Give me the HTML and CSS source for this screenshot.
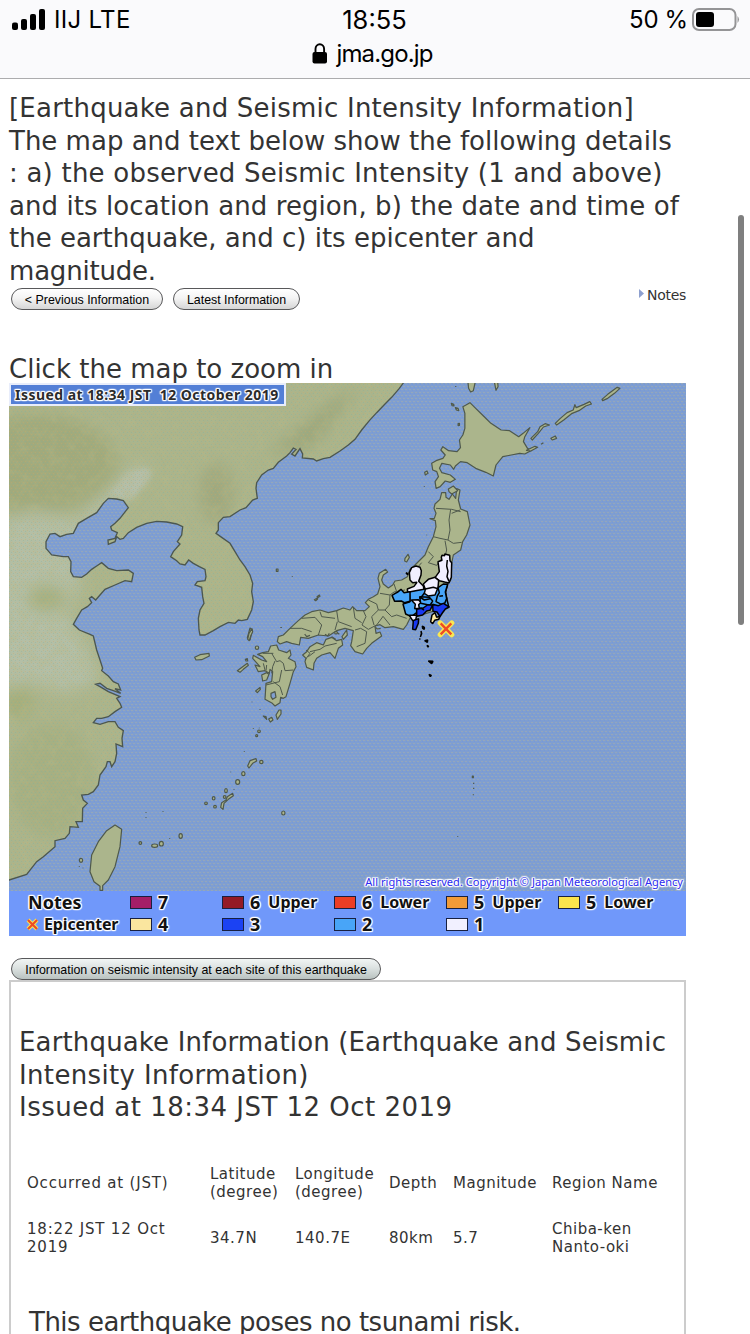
FILE: index.html
```html
<!DOCTYPE html>
<html lang="en">
<head>
<meta charset="utf-8">
<title>Earthquake Information</title>
<link rel="stylesheet" href="styles.css">
</head>
<body>
<header class="browser-bar">
  <div class="status-row">
    <div class="carrier">
      <svg class="signal" viewBox="0 0 34 22"><rect x="0" y="13.500" width="6" height="7.500" rx="2"/><rect x="9" y="10" width="6" height="11" rx="2"/><rect x="18" y="5" width="6" height="16" rx="2"/><rect x="27" y="0" width="6" height="21" rx="2"/></svg>
      <span>IIJ LTE</span>
    </div>
    <div class="clock">18:55</div>
    <div class="power"><span>50 %</span>
      <svg class="battery" viewBox="0 0 48 24"><rect x="1" y="1" width="42.500" height="21" rx="6" fill="none" stroke="#949496" stroke-width="2"/><rect x="4" y="4" width="18" height="15" rx="3"/><path d="M45.500 8q3 3.500 0 7z" fill="#949496"/></svg>
    </div>
  </div>
  <div class="address-row">
    <svg class="lock" viewBox="0 0 16 21"><rect x="0.500" y="9" width="14.500" height="11.500" rx="2"/><path d="M3.500 10V6a4.300 4.800 0 0 1 8.600 0v4" fill="none" stroke="#000" stroke-width="1.900"/></svg>
    <span class="url">jma.go.jp</span>
  </div>
</header>

<main class="page">
  <p class="intro"><span class="wide">[Earthquake and Seismic Intensity Information]</span><br>The map and text below show the following details<br><span class="wide">: a) the observed Seismic Intensity (1 and above)</span><br><span class="slight">and its location and region, b) the date and time of</span><br>the earthquake, and c) its epicenter and<br><span class="narrow">magnitude.</span></p>
  <div class="controls">
    <button class="pill prev">&lt; Previous Information</button>
    <button class="pill latest">Latest Information</button>
    <a class="notes"><svg class="arrow" viewBox="0 0 6 9"><path d="M1 0l5 4.500L1 9z" fill="#8ea0cf"/></svg>Notes</a>
  </div>
  <p class="hint">Click the map to zoom in</p>

  <section class="map">
    <svg class="chart" viewBox="27 9 2031 1524" preserveAspectRatio="none">
      <defs>
        <pattern id="dots" x="27" y="9" width="12" height="18" patternUnits="userSpaceOnUse"><path d="M0 1.500h6M6 10.500h6" stroke="#c3bb86" stroke-width="3" opacity=".3"/><path d="M9 4.500h3M3 13.500h3" stroke="#5f8fe8" stroke-width="3" opacity=".25"/></pattern>
        <pattern id="grain" x="27" y="9" width="12" height="18" patternUnits="userSpaceOnUse"><path d="M0 1.500h3M6 10.500h3" stroke="#cfa565" stroke-width="3" opacity=".35"/><path d="M6 4.500h3M0 13.500h3" stroke="#78aaa0" stroke-width="3" opacity=".3"/></pattern>
        <filter id="soft" x="-50%" y="-50%" width="200%" height="200%"><feGaussianBlur stdDeviation="22"/></filter>
        <filter id="haze" x="-50%" y="-50%" width="200%" height="200%"><feGaussianBlur stdDeviation="8"/></filter>
        <filter id="relief" x="0" y="0" width="100%" height="100%"><feTurbulence type="fractalNoise" baseFrequency=".035" numOctaves="4" seed="7"/><feColorMatrix values="0 0 0 0 .47 0 0 0 0 .49 0 0 0 0 .25 1.300 0 0 0 -.5"/></filter>
        <path id="asia" d="M10 -5H1218L1210 9L1198 25L1175 52L1155 72L1130 98L1108 122L1085 150L1065 178L1045 195L1020 213L990 232L970 236L950 243L940 237L907 234L908 222L900 206L885 228L875 222L888 208L880 204L870 218L860 228L835 247L820 265L805 270L785 285L770 308L768 325L772 355L758 360L738 383L720 390L690 410L670 412L655 428L655 450L648 460L665 472L690 490L705 515L720 540L735 560L750 585L758 610L755 635L760 665L755 690L742 718L725 722L715 720L705 730L685 727L660 740L640 752L615 765L600 765L597 750L595 715L600 690L612 670L608 650L605 622L585 615L592 605L615 602L618 590L615 568L598 560L580 550L566 540L555 555L540 552L530 542L512 530L520 515L540 492L532 485L545 465L548 440L530 432L500 426L470 424L440 430L410 442L385 458L370 475L360 478L350 470L345 485L325 493L324 480L345 475L352 458L335 450L332 440L345 430L360 415L385 383L370 362L350 357L325 355L310 370L290 398L260 415L235 430L220 460L200 463L180 470L165 460L150 462L138 485L138 505L155 525L190 530L205 530L213 545L212 575L220 590L245 592L260 582L275 568L290 558L305 548L325 565L350 572L385 570L400 580L395 605L375 602L345 615L315 628L300 645L287 660L275 650L268 655L275 668L262 680L245 690L230 715L220 733L238 750L270 763L280 768L290 810L300 840L308 865L305 872L325 888L340 905L355 912L362 930L345 926L362 940L340 932L320 925L300 910L287 913L300 920L325 935L360 950L350 955L360 970L365 982L345 995L325 1010L305 1015L290 1015L280 1028L300 1033L325 1025L345 1025L355 1042L370 1052L366 1075L368 1100L348 1092L350 1120L345 1145L335 1160L330 1145L322 1145L318 1160L300 1185L295 1215L280 1235L265 1243L245 1245L250 1260L262 1270L248 1285L247 1325L228 1325L235 1342L210 1340L208 1360L195 1375L165 1382L165 1400L130 1430L110 1445L80 1483L27 1500L10 1505Z"/>
        <clipPath id="asiaClip"><use href="#asia"/></clipPath>
      </defs>
      <rect x="27" y="9" width="2031" height="1524" fill="#7f9ed1"/>
      <rect x="27" y="9" width="2031" height="1524" fill="url(#dots)"/>
      <use href="#asia" class="land"/>
      <g clip-path="url(#asiaClip)">
        <g filter="url(#soft)">
          <ellipse cx="110" cy="250" rx="240" ry="150" fill="#a1aa7c"/>
          <path d="M0 430L100 390L230 420L420 250L450 270L300 420L220 480L240 620L200 700L260 800L300 900L200 940L60 900L0 1080Z" fill="#b4bfa6"/>
          <ellipse cx="140" cy="655" rx="60" ry="40" fill="#a6b080"/>
          <ellipse cx="50" cy="970" rx="50" ry="50" fill="#a4af7c"/>
          <ellipse cx="155" cy="1200" rx="130" ry="170" fill="#a5b083"/>
          <path d="M700 360L830 200L1000 60L1080 20L940 200L800 230Z" fill="#9da77b"/>
          <ellipse cx="650" cy="340" rx="50" ry="90" fill="#a0a97e"/>
        </g>
        <path d="M325 340L350 320L370 290L395 272L440 265L455 275L440 310L415 335L395 360L370 355Z" fill="#b5bfa8" filter="url(#haze)"/>
        <rect x="27" y="9" width="1190" height="1500" filter="url(#relief)" opacity=".55"/>
        <rect x="27" y="9" width="1190" height="1500" fill="url(#grain)"/>
      </g>
      <use href="#asia" class="coast"/>

      <g class="isle">
        <path d="M345 1335L365 1348L360 1400L345 1460L325 1500L308 1517L308 1531H300V1519L282 1505L270 1475L275 1425L295 1385L320 1352Z"/>
        <path d="M584 832L600 824L627 820L628 828L605 839L588 840Z"/>
        <path d="M712 872L728 860L742 850L745 856L730 868L720 877ZM736 838L742 836L743 843L738 843ZM742 774L750 744L757 750L750 780Z"/>
        <ellipse cx="243" cy="1441" rx="5" ry="6"/><ellipse cx="464" cy="1397" rx="9" ry="5"/><ellipse cx="484" cy="1391" rx="6" ry="7"/><ellipse cx="542" cy="1368" rx="5" ry="7"/><circle cx="421" cy="1389" r="4"/><path d="M438 1296v2M438 1311v2M489 1294v2M509 1375v2M238 1458v2M249 1463v2"/>
        <path d="M829 567h5v7h-5zM877 589v2M943 659l9-5 1 3-6 5zM951 650l7-5 2 4-7 4zM843 741v3"/>
        <path d="M1417 1188h3v5h-3zM1421 1208v4M1421 1223v4M1420 1243v3M1373 1368v2"/>
      </g>

      <!-- Hokkaido and the Kuril islands -->
      <g class="isle" transform="translate(1290 0) scale(1.0156 1)">
        <path d="M97 80L105 76L118 68L135 85L155 105L180 130L210 150L235 152L262 170L275 160L295 143L280 170L276 185L288 205L298 212L280 222L265 220L240 225L215 230L195 255L187 288L165 277L135 265L110 248L90 245L75 258L70 268L60 255L35 250L28 265L35 278L60 285L75 298L60 307L45 303L30 320L18 325L15 305L25 290L20 275L8 270L5 250L18 242L38 235L45 225L32 210L38 200L55 212L80 215L90 203L87 180L97 165L103 145L103 100Z"/>
        <path d="M298 175L318 155L325 140L340 131L353 135L335 141L320 160L302 180ZM370 130L385 115L405 98L423 90L428 74L432 83L455 73L472 65L477 72L460 78L440 92L420 100L395 120L374 135ZM508 58L525 43L553 22L561 25L545 40L525 55L510 62ZM357 175L370 168L374 175L361 180ZM285 211L310 199L318 202L298 213ZM328 193L335 188"/>
        <path d="M112 5L114 25L120 36L128 32L134 5ZM190 5L195 31L201 20L200 5ZM63 70l7 3 1 5-6-1zM75 83l8 2 2 7-7-2zM83 131l4-1v6l-4 1zM76 18v3"/>
      </g>

      <!-- Honshu -->
      <g class="isle" transform="translate(720 0)">
        <path d="M605 338L600 358L585 372L582 385L588 400L583 415L570 416L586 422L588 440L580 470L565 500L555 525L540 540L525 555L510 568L502 590L485 600L465 603L458 615L445 624L430 612L425 600L430 585L443 576L437 568L418 580L414 595L420 620L413 642L400 650L385 658L376 668L388 680L375 692L350 692L338 680L330 690L310 684L290 692L265 698L240 690L215 695L195 705L175 722L150 745L130 765L115 770L112 785L120 792L140 785L155 790L178 795L182 772L205 775L235 765L265 768L290 752L315 745L340 752L335 785L332 797L345 815L368 822L380 805L395 790L425 768L420 756L408 760L405 738L420 734L435 743L460 740L490 748L500 735L510 715L625 680L615 620L632 600L635 550L640 525L662 510L668 485L680 465L690 435L682 395L662 387L655 360L660 330L650 326L647 355L637 342L627 358L618 352L617 338Z"/>
        <path d="M625 327L640 318L653 332L635 342L627 335ZM495 535L504 523L508 532L500 546L494 543ZM554 277L561 273L564 280L556 285ZM553 318v2M560 464v2"/>
        <path class="borders" d="M588 385L635 388L662 395M632 388L627 420L630 450L624 480L600 475L580 470M635 400L660 390M624 480L640 490L665 487M615 482L620 510L615 530M565 515L580 530L565 548L590 556M590 556L605 535M545 548L530 565M462 612L470 635L460 650M420 640L450 645L462 636L495 630M450 645L448 675L435 690L455 710L470 705L500 715M385 660L410 672L415 690L435 690M370 692L378 710L366 735L385 748L410 735L430 708M415 690L395 710L402 735M340 682L345 715L365 728M290 692L295 725L335 740M240 695L245 710L285 715M185 715L225 712L245 735L235 765M150 745L185 745L215 755M292 725L285 750M345 750L362 745L380 755L375 790L350 800M430 710L450 735"/>
        <path d="M194 762l6 8 10-4M255 763l8 5 5-8M290 757l8 6M404 740l8 7 10-2M275 770l12 8"/>
      </g>

      <!-- Kyushu, Shikoku, Ryukyu -->
      <g class="isle" transform="translate(570 690)">
        <path d="M242 108L260 105L266 120L290 128L300 120L303 135L295 145L315 155L318 170L310 185L300 220L288 260L280 265L272 262L270 278L255 288L247 280L225 268L228 220L245 215L248 185L240 178L238 190L225 182L205 185L195 165L210 170L188 145L190 136L215 150L230 155L218 140L203 133L218 128L235 125Z"/>
        <path class="bay" d="M243 250L255 245L258 262L248 268L243 260Z"/>
        <path d="M215 195L230 188L237 193L230 210L218 213Z"/>
        <path d="M338 135L350 125L360 110L380 98L400 105L408 88L425 82L440 92L455 88L458 105L445 115L435 145L420 128L395 135L380 145L372 160L370 180L350 172L345 155L348 145Z"/>
        <path d="M470 60L472 75L460 88L456 80ZM262 328L258 315L267 300L273 300L273 312ZM236 327L245 322L249 330L241 336ZM220 318L228 320L230 328ZM173 468L180 452L198 446L200 453L188 460L177 474ZM92 592L95 578L108 570L112 560L128 550L130 557L115 568L102 580L99 598ZM197 243L210 232L211 238L202 248ZM173 88L177 70L186 56L188 65L182 78L178 92Z"/>
        <ellipse cx="201" cy="113" rx="5" ry="5"/><ellipse cx="214" cy="456" rx="5" ry="5"/><ellipse cx="160" cy="491" rx="5" ry="6"/><ellipse cx="143" cy="516" rx="6" ry="7"/><ellipse cx="108" cy="542" rx="4" ry="6"/><ellipse cx="71" cy="565" rx="4" ry="5"/><circle cx="75" cy="590" r="4"/><circle cx="48" cy="580" r="4"/><circle cx="104" cy="561" r="4"/><circle cx="207" cy="364" r="4"/><circle cx="200" cy="377" r="3"/><ellipse cx="280" cy="609" rx="5" ry="6"/><circle cx="438" cy="68" r="4"/>
        <path d="M132 537v2M122 485v2M163 424v2M186 275v2M210 298v2M190 355v2M208 353v2M274 51v2"/>
        <path class="borders" d="M245 130L260 155L270 152L280 160L285 182L310 180M255 153L248 170L245 190M275 180L268 215L228 225M250 215L270 230L278 255M218 130L250 130M348 120L360 130L345 150M360 125L390 118L405 108L440 100M355 140L375 125M230 165L228 182M220 160L225 180"/>
      </g>

      <!-- Prefectures where shaking was observed -->
      <g class="regions" transform="translate(1140 480)">
        <path fill="#48a5f8" d="M88 155L108 150L132 146L174 145L203 133L196 158L206 200L160 200L118 212L94 230L77 222L69 192L90 185Z"/>
        <g fill="#f1efff">
          <path d="M95 83L108 78L120 82L124 92L123 105L116 124L130 138L132 148L107 152L83 157L82 147L102 139L111 127L98 128L90 120L88 98Z"/>
          <path d="M184 52L186 46L194 47L194 42L209 46L210 62L215 68L214 112L207 129L194 126L178 122L165 113L178 95L174 65L186 61Z"/>
          <path d="M130 132L145 118L165 112L176 121L174 143L165 165L145 168L133 160L136 148Z"/>
          <path d="M88 226L110 226L107 240L98 242ZM94 180L115 179L123 187L116 194L118 205L104 206L106 193Z"/>
        </g>
        <g fill="#48a5f8">
          <path d="M36 166L46 160L52 157L63 148L72 158L90 155V184L73 188L64 183L44 184Z"/>
          <path d="M174 143L190 132L203 133L196 156L200 176L194 190L184 193L168 185L172 168L178 158Z"/>
          <path d="M119 170L148 172L158 183L150 196L122 190Z"/>
        </g>
        <g fill="#1838f0">
          <path d="M110 208L130 204L142 195L158 195L150 211L140 213L128 225L110 229Z"/>
          <path d="M158 193L175 197L190 190L208 201L196 207L187 219L180 230L171 216L159 214Z"/>
          <path d="M100 242L116 236L115 250L107 269L98 268Z"/>
        </g>
        <path fill="#fce9a1" d="M152 245L156 225L165 218L170 232L180 229L176 238L164 241L158 251Z"/>
        <path class="split" d="M202 60L200 78L204 94L201 110L207 124M133 148L160 142L174 146M122 173L133 180L150 176M121 203L132 210M178 169L189 167M134 158L120 176"/>
        <path fill="#000" d="M127 258l6 4v6l-5-3zM123 273l2 8-4 10M119 295l1 4M134 302l9-2-1 7zM141 316l5 3-2 2zM145 363l14 1-4 7zM147 403l7 3-3 4zM78 98l5 3v3z"/>
        <path d="M181 249L215 284M215 249L181 284" stroke="#fae752" stroke-width="16" stroke-linecap="round"/>
        <path d="M182 250L214 283M214 250L182 283" stroke="#ee4b24" stroke-width="7"/>
      </g>
    </svg>
    <div class="issued">Issued at 18:34 JST&nbsp; 12 October 2019</div>
    <div class="copyright">All rights reserved. Copyright © Japan Meteorological Agency</div>
    <div class="legend">
      <b class="title">Notes</b>
      <span class="key"><i class="swatch s7"></i><b>7</b></span>
      <span class="key"><i class="swatch s6u"></i><b>6</b><em>Upper</em></span>
      <span class="key"><i class="swatch s6l"></i><b>6</b><em>Lower</em></span>
      <span class="key"><i class="swatch s5u"></i><b>5</b><em>Upper</em></span>
      <span class="key"><i class="swatch s5l"></i><b>5</b><em>Lower</em></span>
      <span class="epi"><svg class="cross" viewBox="0 0 13 13"><path d="M2 2l9 9M11 2l-9 9" stroke="#fae752" stroke-width="4"/><path d="M2 2l9 9M11 2l-9 9" stroke="#ee4b24" stroke-width="2.200"/></svg><em>Epicenter</em></span>
      <span class="key"><i class="swatch s4"></i><b>4</b></span>
      <span class="key"><i class="swatch s3"></i><b>3</b></span>
      <span class="key"><i class="swatch s2"></i><b>2</b></span>
      <span class="key"><i class="swatch s1"></i><b>1</b></span>
    </div>
  </section>

  <button class="pill sites">Information on seismic intensity at each site of this earthquake</button>

  <section class="report">
    <p class="heading"><span class="title-a">Earthquake Information (Earthquake and Seismic</span><br><span class="title-b">Intensity Information)</span><br><span class="title-c">Issued at 18:34 JST 12 Oct 2019</span></p>
    <div class="table">
      <div class="when">Occurred at (JST)</div><div>Latitude<br>(degree)</div><div>Longitude<br>(degree)</div><div>Depth</div><div>Magnitude</div><div>Region Name</div>
      <div class="when">18:22 JST 12 Oct<br>2019</div><div>34.7N</div><div>140.7E</div><div>80km</div><div>5.7</div><div>Chiba-ken<br>Nanto-oki</div>
    </div>
    <p class="risk">This earthquake poses no tsunami risk.</p>
  </section>
</main>
<div class="scroll-thumb"></div>
</body>
</html>
```
FILE: styles.css
```css
* { box-sizing: border-box; }
body { margin: 0; width: 750px; height: 1334px; overflow: hidden; background: #fff; color: #333; font-family: "DejaVu Sans", sans-serif; }
p { margin: 0; white-space: nowrap; }
button { font: inherit; }

.browser-bar { height: 79px; background: #fafafc; border-bottom: 1px solid #acacae; color: #000; font-family: Inter, sans-serif; font-size: 24px; }
.status-row { display: grid; grid-template-columns: 1fr 100px 1fr; height: 39px; padding: 0 10px 0 12px; align-items: center; line-height: 39px; }
.carrier { display: flex; align-items: center; gap: 8px; letter-spacing: 0.3px; }
.signal { width: 34px; height: 22px; }
.clock { text-align: center; font-size: 25.500px; padding-right: 3px; }
.power { display: flex; justify-content: flex-end; align-items: center; gap: 4px; word-spacing: -1px; }
.battery { width: 48px; height: 24px; }
.address-row { display: flex; justify-content: center; align-items: center; gap: 8px; height: 30px; padding-right: 5px; }
.url { letter-spacing: -0.850px; position: relative; top: -1px; }
.lock { width: 16px; height: 21px; margin-top: -2px; }

.page { padding-left: 9px; width: 686px; }
.intro, .hint, .heading, .risk { font-size: 26px; line-height: 32.600px; }
.intro { padding-top: 13px; height: 209px; }
.wide { letter-spacing: 0.220px; }
.slight { letter-spacing: 0.080px; }
.narrow { letter-spacing: -0.200px; }
.controls { display: flex; height: 65px; align-items: flex-start; padding-left: 2px; }
.pill { display: block; height: 22px; padding: 0; border: 1.500px solid #58585a; border-radius: 11px; background: linear-gradient(#fff, #f4f4f4 45%, #d6d6d6); color: #000; font: 12.400px/22px "Liberation Sans", Arial, sans-serif; white-space: nowrap; }
.prev { width: 152px; margin-right: 10px; }
.latest { width: 127px; }
.notes { margin-left: auto; font-size: 14px; line-height: 15px; display: flex; gap: 3px; letter-spacing: -0.300px; }
.arrow { width: 6px; height: 9px; margin-top: 1px; }
.hint { height: 30px; }

.map { position: relative; width: 677px; height: 553px; }
.chart { display: block; width: 677px; height: 508px; }
.land { fill: #abb58c; }
.coast { fill: none; stroke: #4c5750; stroke-width: 4; }
.isle { fill: #abb58c; stroke: #4f594c; stroke-width: 3.600; stroke-linejoin: round; }
.isle .borders { fill: none; stroke-width: 3; }
.isle .bay { fill: #819fd1; }
.regions { stroke: #000; stroke-width: 4.500; stroke-linejoin: bevel; }
.split { fill: none; }
.issued, .copyright, .legend { font-family: "Noto Sans", sans-serif; color: #111; text-shadow: 1px 0 1px #fff, -1px 0 1px #fff, 0 1px 1px #fff, 0 -1px 1px #fff, 1px 1px 1px #fff, -1px -1px 1px #fff, 1px -1px 1px #fff, -1px 1px 1px #fff; }
.issued { position: absolute; left: 0; top: 0; width: 277px; height: 23px; padding-left: 4px; background: #537fd6; border: 2px solid #e8edfb; color: #2b2b2b; font-size: 14px; font-weight: 700; line-height: 19px; letter-spacing: 0.470px; white-space: nowrap; }
.copyright { position: absolute; right: 3px; top: 491px; color: #2a2af0; font-size: 11px; line-height: 16px; letter-spacing: 0.050px; white-space: nowrap; }
.legend { display: grid; grid-template-columns: 101px 92px 112px 112px 112px 1fr; grid-template-rows: 22px 22px; height: 45px; padding: 0 0 0 19px; background: #7098fa; font-size: 18px; line-height: 22px; }
.legend em { font-style: normal; font-weight: 700; font-size: 16px; }
.key { display: flex; align-items: center; gap: 6px; margin-left: 1px; }
.key em { margin-left: 2px; }
.swatch { width: 22px; height: 13px; margin-top: 1px; border: 1px solid #182040; }
.s7 { background: #a51e67; } .s6u { background: #941a25; } .s6l { background: #ec3e25; } .s5u { background: #f29b38; } .s5l { background: #fbe54d; }
.s4 { background: #fae69f; } .s3 { background: #1b42f3; } .s2 { background: #48a5f8; } .s1 { background: #f1f0ff; }
.epi { display: flex; align-items: center; gap: 5px; margin-left: -2px; letter-spacing: -0.150px; }
.cross { width: 13px; height: 13px; }

.sites { position: relative; z-index: 1; width: 370px; margin: 22px 0 0 2px; background: linear-gradient(#f1f5f4, #dce2e1 45%, #b9c2c0); }
.report { width: 677px; height: 370px; border: 2px solid #ccc; padding: 44px 0 0 8px; }
.heading { height: 127px; }
.title-a { letter-spacing: 0.150px; }
.title-b { letter-spacing: 0.350px; }
.title-c { letter-spacing: 0.480px; }
.table { display: grid; grid-template-columns: 183px 85px 94px 64px 99px 1fr; grid-template-rows: 38px 72px; align-items: center; margin: 11px 0 0 8px; font-size: 15px; line-height: 18.500px; letter-spacing: 0.500px; white-space: nowrap; }
.when { letter-spacing: 0.800px; }
.risk { margin: 32px 0 0 10px; letter-spacing: -0.500px; }
.scroll-thumb { position: absolute; left: 738px; top: 215px; width: 6px; height: 410px; border-radius: 3px; background: #7f7f7f; }
```
